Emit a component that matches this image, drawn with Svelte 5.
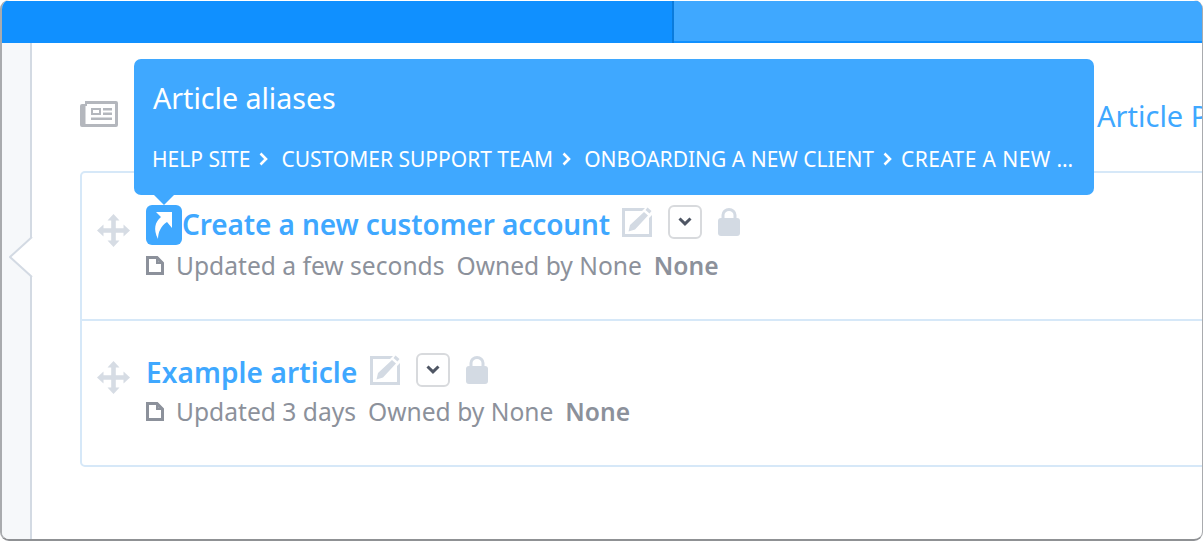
<script lang="ts">
    const articles = [
        { title: "Create a new customer account", updated: "Updated a few seconds", alias: true },
        { title: "Example article", updated: "Updated 3 days", alias: false },
    ];
    const crumbs = ["HELP SITE", "CUSTOMER SUPPORT TEAM", "ONBOARDING A NEW CLIENT"];
</script>

<div class="window">
    <header class="topbar">
        <div class="tab-main"></div>
        <div class="tab-rest"></div>
    </header>

    <div class="body">
        <aside class="rail"></aside>
        <svg class="notch" width="24" height="44" viewBox="0 0 24 44">
            <path d="M23 1 L1 21 L23 41 Z" fill="#fff" />
            <path d="M23 1 L1 21 L23 41" fill="none" stroke="#d3dae3" stroke-width="2" />
        </svg>

        <main class="content">
            <div class="heading">
                <svg class="news" width="38" height="26" viewBox="0 0 38 26">
                    <path fill="#b4b7bd" fill-rule="evenodd" d="M5 0h31a2 2 0 0 1 2 2v22a2 2 0 0 1-2 2H2a2 2 0 0 1-2-2V5a2 2 0 0 1 2-2h3zM5.500 5v18H7V5zM7 3v20h28V3zM11 7h10v7H11zm2 2v3h6V9zM23 7h9v2.500h-9zM23 11.500h9V14h-9zM11 16.500h21V19H11z" />
                </svg>
                <h1>Article Pages</h1>
            </div>

            <ul class="list">
                {#each articles as a}
                    <li class="row">
                        <svg class="move" width="33" height="33" viewBox="0 0 33 33">
                            <path fill="#d6dce4" d="M16.500 0l6 6.500h-3.700v7.700h7.700v-3.700l6.500 6-6.500 6v-3.700h-7.700v7.700h3.700l-6 6.500-6-6.500h3.700v-7.700H6.500v3.700L0 16.500l6.500-6v3.700h7.700V6.500h-3.700z" />
                        </svg>
                        <div class="info">
                            <div class="title-line">
                                {#if a.alias}
                                    <span class="alias">
                                        <svg width="36" height="40" viewBox="0 0 36 40">
                                            <path fill="#fff" d="M26 7H10l5 5C9 17 7 24 12 34c0-7 3-13 9-17l5 6z" />
                                        </svg>
                                    </span>
                                {/if}
                                <a href="#top">{a.title}</a>
                                <svg class="edit" width="30" height="30" viewBox="0 0 30 30">
                                    <path fill="#d3dae3" d="M0 1h23l-3 3H3v23h24V11l3-3v22H0z" />
                                    <path fill="#d3dae3" d="M25.500 .5l4 3.500-2 2.500-4-3.500zM22 5l4 3.500-13 14-6.500 2 1.500-6.500z" />
                                </svg>
                                <button class="chevron" aria-label="More">
                                    <svg width="14" height="9" viewBox="0 0 14 9">
                                        <path d="M1.500 1.500L7 6.800l5.500-5.300" fill="none" stroke="#4f5664" stroke-width="3" />
                                    </svg>
                                </button>
                                <svg class="lock" width="22" height="28" viewBox="0 0 22 28">
                                    <path fill="#d3dae3" d="M3 10h16a3 3 0 0 1 3 3v12a3 3 0 0 1-3 3H3a3 3 0 0 1-3-3V13a3 3 0 0 1 3-3z" />
                                    <path fill="none" stroke="#d3dae3" stroke-width="3" d="M5 11V7a6 5.500 0 0 1 12 0v4" />
                                </svg>
                            </div>
                            <div class="meta">
                                <svg width="18" height="19" viewBox="0 0 18 19">
                                    <path fill="none" stroke="#8c919b" stroke-width="3" d="M1.500 1.500h9.500l5.500 5.500v10.500h-15z" />
                                    <path fill="#8c919b" d="M10 1.500h2.500v4h4v2.500H10z" />
                                </svg>
                                <span>{a.updated}</span>
                                <span class="owner">Owned by None</span>
                                <b>None</b>
                            </div>
                        </div>
                    </li>
                {/each}
            </ul>
        </main>
    </div>

    <div class="tooltip">
        <div class="tip-title">Article aliases</div>
        <div class="crumbs">
            {#each crumbs as c}
                <span>{c}</span>
                <svg width="9" height="14" viewBox="0 0 9 14">
                    <path d="M1.500 1.500L7 7l-5.500 5.500" fill="none" stroke="#fff" stroke-width="2.600" />
                </svg>
            {/each}
            <span class="last">CREATE A NEW …</span>
        </div>
    </div>
</div>

<style>
    :global(body) {
        margin: 0;
        background: #fff;
        overflow: hidden;
    }

    .window {
        position: relative;
        width: 1203px;
        height: 541px;
        box-sizing: border-box;
        border: 1px solid #a9abae;
        border-left-width: 2px;
        border-bottom: 2px solid #8f9194;
        border-top: 0;
        border-radius: 9px;
        overflow: hidden;
        display: flex;
        flex-direction: column;
        font-family: "Noto Sans", sans-serif;
        background: #fff;
    }

    .topbar {
        display: flex;
        height: 42px;
        flex: none;
        margin-top: 1px;
        background: #1090ff;
    }

    .tab-main {
        width: 670px;
        border-right: 2px solid #0a7bdc;
    }

    .tab-rest {
        flex: 1;
        height: 40px;
        background: #3fa8ff;
    }

    .body {
        position: relative;
        flex: 1;
        display: flex;
        min-height: 0;
    }

    .rail {
        width: 28px;
        flex: none;
        background: #f6f8fa;
        border-right: 2px solid #d3dae3;
    }

    .notch {
        position: absolute;
        left: 7px;
        top: 193px;
    }

    .content {
        flex: 1;
        min-width: 0;
        padding: 13px 0 0 48px;
    }

    .heading {
        display: flex;
        align-items: center;
        height: 115px;
        white-space: nowrap;
    }

    .news {
        flex: none;
    }

    h1 {
        margin: 4px 0 0 979px;
        font-size: 29px;
        font-weight: 400;
        color: #3fa8ff;
    }

    .list {
        list-style: none;
        margin: 0;
        padding: 0;
        width: 1300px;
        border: 2px solid #d6e8f8;
        border-radius: 5px;
    }

    .row {
        display: flex;
        gap: 16px;
        padding: 32px 0 0 15px;
        box-sizing: border-box;
    }

    .row:first-child {
        height: 148px;
        border-bottom: 2px solid #d6e8f8;
    }

    .row:last-child {
        height: 144px;
    }

    .move {
        flex: none;
        margin-top: 9px;
    }

    .row:last-child .move {
        margin-top: 8px;
    }

    .title-line {
        display: flex;
        align-items: center;
        height: 40px;
        white-space: nowrap;
    }

    .alias {
        display: block;
        width: 36px;
        height: 40px;
        border-radius: 6px;
        background: #3fa8ff;
    }

    .alias svg {
        display: block;
    }

    .title-line a {
        font-size: 28px;
        font-weight: 600;
        letter-spacing: 0.1px;
        color: #3fa8ff;
        text-decoration: none;
        margin: 0 13px 2px 0;
    }

    .alias + a {
        letter-spacing: -0.1px;
        margin-right: 12px;
    }

    .edit,
    .lock {
        flex: none;
        margin-bottom: 7px;
    }

    .chevron {
        width: 34px;
        height: 34px;
        margin: 0 16px 7px;
        padding: 0;
        display: flex;
        align-items: center;
        justify-content: center;
        background: #fff;
        border: 2px solid #d8dadd;
        border-radius: 6px;
    }

    .meta {
        display: flex;
        align-items: center;
        margin-top: 2px;
        font-size: 24.6px;
        color: #8c919b;
        white-space: nowrap;
    }

    .row:first-child .meta {
        margin-top: 4px;
    }

    .meta svg {
        margin-right: 12px;
    }

    .owner {
        margin: 0 12px;
    }

    .meta b {
        font-weight: 600;
    }

    .tooltip {
        position: absolute;
        left: 132px;
        top: 59px;
        width: 960px;
        height: 136px;
        box-sizing: border-box;
        padding: 20px 19px 0 18px;
        border-radius: 7px;
        background: #3fa8ff;
        color: #fff;
    }

    .tooltip::after {
        content: "";
        position: absolute;
        left: 20px;
        bottom: -10px;
        border-left: 10px solid transparent;
        border-right: 10px solid transparent;
        border-top: 10px solid #3fa8ff;
    }

    .tip-title {
        font-size: 28.6px;
        line-height: 38px;
        padding-left: 1px;
    }

    .crumbs {
        display: flex;
        align-items: center;
        margin-top: 28px;
        font-size: 21px;
        line-height: 28px;
        white-space: nowrap;
    }

    .crumbs svg {
        flex: none;
        margin: 0 13px 0 9px;
    }

    .last {
        letter-spacing: 0.4px;
        margin-left: -4px;
    }
</style>
